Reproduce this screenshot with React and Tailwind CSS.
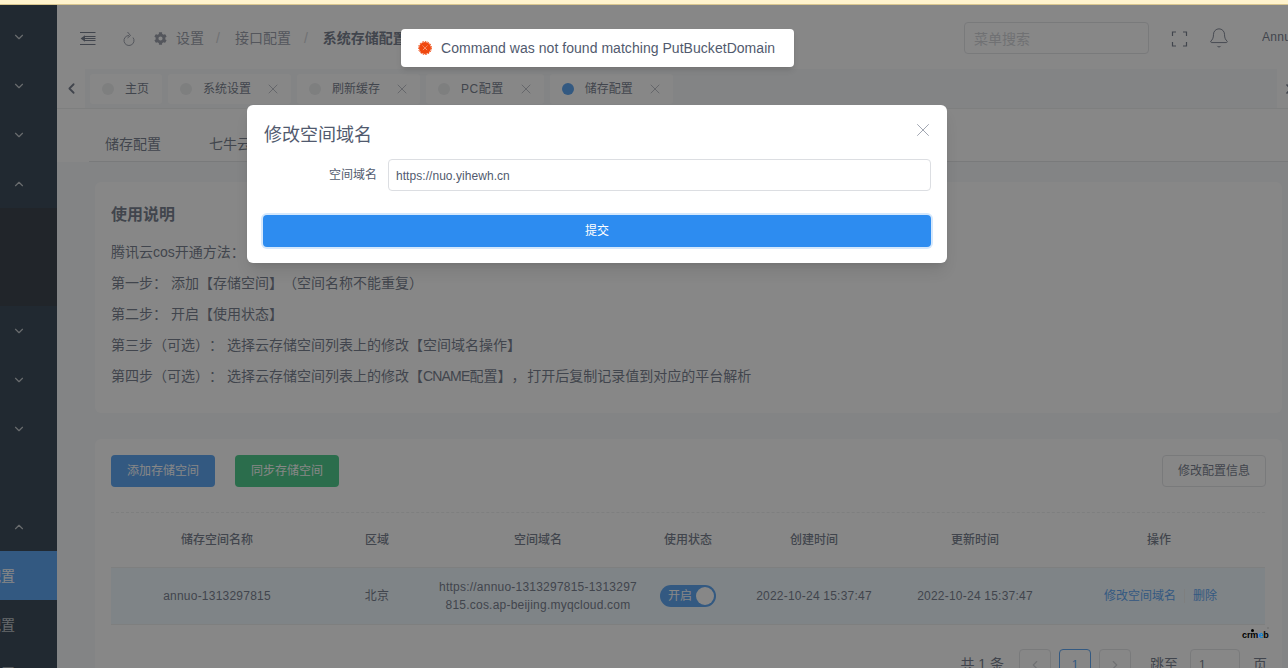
import React from "react";
import { ChevronDown, ChevronUp, ChevronLeft, ChevronRight, X, Bell } from "lucide-react";
import { FaCog } from "react-icons/fa";

const font = { fontFamily: '"Liberation Sans","Noto Sans CJK SC",sans-serif' };

function SideRow({ up, chev, text, active }) {
  return (
    <div className={`h-[49px] shrink-0 flex items-center ${active ? "bg-[#2d8cf0] text-white" : "text-white/70"}`}>
      {chev && (up ? <ChevronUp size={14} className="ml-[12px] text-white/70" /> : <ChevronDown size={14} className="ml-[12px] text-white/70" />)}
      {text && <span className="ml-[-13px] text-sm whitespace-nowrap">{text}</span>}
    </div>
  );
}

function Sidebar() {
  return (
    <aside className="w-[57px] shrink-0 bg-[#001529] pt-[7px] overflow-hidden flex flex-col">
      <SideRow chev />
      <SideRow chev />
      <SideRow chev />
      <SideRow chev up />
      <div className="h-[98px] shrink-0 bg-[#000c17]" />
      <SideRow chev />
      <SideRow chev />
      <SideRow chev />
      <SideRow />
      <SideRow chev up />
      <SideRow text="配置" active />
      <SideRow text="配置" />
      <SideRow text="配置" />
    </aside>
  );
}

function FoldIcon() {
  return (
    <svg width="16" height="13" viewBox="0 0 16 13" fill="none" stroke="currentColor" strokeWidth="1">
      <path d="M0 .5h15.500M0 12.500h15.500" />
      <path d="M5 4.500h10.500M5 6.500h10.500M5 8.500h10.500" />
      <path d="M5 3.200v6.600L.6 6.500z" fill="currentColor" stroke="none" />
    </svg>
  );
}

function RefreshIcon() {
  return (
    <svg width="12" height="15" viewBox="0 0 12 15" fill="none" stroke="currentColor" strokeWidth="1">
      <path d="M6 4.500A5 5 0 1 0 10 6.500" />
      <path d="M4.500 1L7.500 4.500L4.500 7" />
    </svg>
  );
}

function FullIcon() {
  return (
    <svg width="17" height="16" viewBox="0 0 17 16" fill="none" stroke="currentColor" strokeWidth="1.200">
      <path d="M5 1H1.500v4M12 1h3.500v4M5 15H1.500v-4M12 15h3.500v-4" />
    </svg>
  );
}

function Header() {
  return (
    <header className="h-[64px] shrink-0 bg-white flex items-center text-[#515a6e]">
      <div className="ml-[23px] mt-[3px] text-[#515a6e]"><FoldIcon /></div>
      <div className="ml-[27px] mt-[2px] text-[#808695]"><RefreshIcon /></div>
      <FaCog size={13} className="ml-[19px] mt-[3px] text-[#808695]" />
      <div className="ml-[9px] flex items-center text-sm mt-[1px]">
        <span className="text-[#808695]">设置</span>
        <span className="ml-[12px] mr-[15px] text-[#c5c8ce]">/</span>
        <span className="text-[#808695]">接口配置</span>
        <span className="ml-[13px] mr-[15px] text-[#c5c8ce]">/</span>
        <span className="font-bold text-[#515a6e] whitespace-nowrap">系统存储配置</span>
      </div>
      <div className="flex-1" />
      <div className="w-[185px] h-[32px] rounded border border-[#dcdee2] flex items-center pl-[9px] pt-[1px] mt-[2px] text-sm text-[#c5c8ce]">菜单搜索</div>
      <div className="ml-[22px] mt-[3px]"><FullIcon /></div>
      <Bell size={22} strokeWidth={1} className="ml-[20px] mt-[1px]" />
      <div className="ml-[32px] w-[26px] overflow-hidden text-xs whitespace-nowrap tracking-[0.3px]">Annuo</div>
    </header>
  );
}

function Tab({ text, close, active, wide }) {
  return (
    <div className={`h-[30px] bg-white rounded-[3px] flex items-center pl-[12px] mr-[6px] shrink-0 ${close ? "pr-[10px]" : "pr-[13px]"}`}>
      <span className={`w-[12px] h-[12px] rounded-full mr-[11px] ${active ? "bg-[#2d8cf0]" : "bg-[#e8eaec]"}`} />
      <span className={`text-xs whitespace-nowrap text-[#515a6e] ${wide ? "tracking-[0.5px]" : ""}`}>{text}</span>
      {close && <X size={16} strokeWidth={1} className="ml-[14px] text-[#808695]" />}
    </div>
  );
}

function TabBar() {
  return (
    <div className="h-[40px] shrink-0 bg-[#f5f7f9] border-b border-[#e8eaec] flex items-center">
      <div className="w-[28px] h-full bg-white flex items-center justify-center text-[#515a6e]"><ChevronLeft size={17} strokeWidth={2.500} /></div>
      <div className="ml-[5px] flex items-center flex-1 overflow-hidden">
        <Tab text="主页" />
        <Tab text="系统设置" close />
        <Tab text="刷新缓存" close />
        <Tab text="PC配置" close wide />
        <Tab text="储存配置" close active />
      </div>
      <div className="w-[11px] h-full bg-white overflow-hidden flex items-center">
        <ChevronRight size={16} strokeWidth={2.500} className="ml-[4px] shrink-0 text-[#515a6e]" />
      </div>
    </div>
  );
}

function SubTabs() {
  const items = ["储存配置", "七牛云储存", "阿里云储存", "腾讯云储存", "京东云储存", "华为云储存"];
  return (
    <div className="h-[53px] shrink-0 bg-white pl-[32px]">
      <div className="h-full border-b border-[#dcdee2] flex items-center pt-[17px] text-sm text-[#515a6e]">
        {items.map((t) => (
          <span key={t} className="ml-[16px] mr-[32px] whitespace-nowrap">{t}</span>
        ))}
      </div>
    </div>
  );
}

function Guide() {
  const rows = [
    "腾讯云cos开通方法：",
    "第一步： 添加【存储空间】（空间名称不能重复）",
    "第二步： 开启【使用状态】",
    "第三步（可选）： 选择云存储空间列表上的修改【空间域名操作】",
    <>第四步（可选）： 选择云存储空间列表上的修改【<span className="tracking-[-0.8px]">CNAME</span>配置】<span className="tracking-[-2px]">，</span> 打开后复制记录值到对应的平台解析</>,
  ];
  return (
    <section className="shrink-0 bg-white rounded-md ml-[38px] mt-[20px] w-[1187px] h-[231px] px-4 pt-[22px] text-[#515a6e] [text-spacing-trim:space-all]">
      <h2 className="h-[22px] leading-[22px] text-base font-bold mb-[11px]">使用说明</h2>
      {rows.map((r, i) => (
        <p key={i} className="h-[31px] leading-[31px] text-sm whitespace-nowrap">{r}</p>
      ))}
    </section>
  );
}

const cols = "grid grid-cols-[212px_108px_214px_86px_166px_156px_212px] items-center text-center text-xs text-[#515a6e]";

function StorageCard() {
  return (
    <section className="shrink-0 bg-white rounded-md ml-[38px] mt-[26px] w-[1187px] h-[260px] pl-4 pr-[17px] pt-4">
      <div className="flex items-start h-[32px]">
        <button className="w-[104px] h-[32px] rounded bg-[#2d8cf0] text-white text-xs">添加存储空间</button>
        <button className="ml-[20px] w-[104px] h-[32px] rounded bg-[#19be6b] text-white text-xs">同步存储空间</button>
        <div className="flex-1" />
        <button className="mr-[-1px] w-[104px] h-[32px] rounded border border-[#dcdee2] text-[#515a6e] text-xs">修改配置信息</button>
      </div>
      <div className="mt-[25px] border-t border-dashed border-[#e8eaec]" />
      <div className={`${cols} h-[54px] font-medium`}>
        <span>储存空间名称</span><span>区域</span><span>空间域名</span><span>使用状态</span><span>创建时间</span><span>更新时间</span><span>操作</span>
      </div>
      <div className={`${cols} h-[58px] bg-[#ebf7ff] border-y border-[#e8eaec] tracking-[0.22px]`}>
        <span>annuo-1313297815</span>
        <span>北京</span>
        <span className="leading-[18px] px-[6px] break-all">https://annuo-1313297815-1313297815.cos.ap-beijing.myqcloud.com</span>
        <span className="flex justify-center">
          <span className="w-[56px] h-[22px] rounded-full bg-[#2d8cf0] flex items-center pl-[8px] pr-[2px] justify-between text-white tracking-normal">
            开启
            <span className="w-[18px] h-[18px] rounded-full bg-white" />
          </span>
        </span>
        <span>2022-10-24 15:37:47</span>
        <span>2022-10-24 15:37:47</span>
        <span className="flex items-center justify-center pl-[3px] text-[#2d8cf0] tracking-normal">
          修改空间域名
          <span className="w-px h-[14px] bg-[#e8eaec] mx-2" />
          删除
        </span>
      </div>
      <div className="mt-[24px] mr-[-2px] flex items-start justify-end text-sm text-[#515a6e]">
        <span className="leading-[30px] mr-[15px] whitespace-nowrap">共 1 条</span>
        <span className="w-[32px] h-[32px] rounded border border-[#dcdee2] flex items-center justify-center text-[#c5c8ce]"><ChevronLeft size={14} /></span>
        <span className="ml-[8px] w-[32px] h-[32px] rounded border border-[#2d8cf0] flex items-center justify-center text-[#2d8cf0] text-xs">1</span>
        <span className="ml-[8px] w-[32px] h-[32px] rounded border border-[#dcdee2] flex items-center justify-center text-[#c5c8ce]"><ChevronRight size={14} /></span>
        <span className="ml-[19px] leading-[30px]">跳至</span>
        <span className="ml-[12px] w-[50px] h-[32px] rounded border border-[#dcdee2] text-xs leading-[30px] pl-[8px]">1</span>
        <span className="ml-[13px] leading-[30px]">页</span>
      </div>
    </section>
  );
}

function Modal() {
  return (
    <div className="absolute left-[247px] top-[105px] w-[700px] h-[158px] bg-white rounded-md shadow-lg z-20 text-[#515a6e]">
      <h3 className="absolute left-[17px] top-[18px] text-lg leading-[24px]">修改空间域名</h3>
      <X size={22} strokeWidth={0.800} className="absolute left-[665px] top-[14px] text-[#808695]" />
      <div className="flex items-center mt-[54px] mx-[16px]">
        <label className="w-[114px] text-right text-xs pr-0">空间域名</label>
        <div className="ml-[11px] flex-1 h-[32px] rounded border border-[#dcdee2] text-xs flex items-center pl-[7px] pt-[1px] tracking-[0.05px]">https://nuo.yihewh.cn</div>
      </div>
      <button className="block mt-[24px] mx-[16px] w-[668px] h-[32px] rounded bg-[#2d8cf0] ring-2 ring-[#d5e8fc] text-white text-xs">提交</button>
    </div>
  );
}

function Toast() {
  return (
    <div className="absolute left-[401px] top-[29px] w-[393px] h-[38px] bg-white rounded shadow-md z-30 flex items-center pl-[17px] text-[#515a6e]">
      <svg width="14" height="14" viewBox="0 0 14 14">
        <circle cx="7" cy="7" r="6" fill="#f0480f" />
        <circle cx="7" cy="7" r="6.500" fill="none" stroke="#f0480f" strokeWidth="1" strokeDasharray="1.500 1.200" />
        <path d="M4.700 4.700l4.600 4.600M9.300 4.700l-4.600 4.600" stroke="#ffd9cc" strokeWidth="0.800" strokeDasharray="1 0.600" />
      </svg>
      <span className="ml-[9px] text-sm tracking-[0.04px] whitespace-nowrap">Command was not found matching PutBucketDomain</span>
    </div>
  );
}

function Logo() {
  return (
    <div className="absolute left-[1242px] top-[629px] z-20 text-[9px] font-bold text-black leading-[13px] tracking-[-0.1px]">
      crm<span className="text-[#0a84e0]">e</span>b
      <span className="absolute left-[9px] top-[0px] w-[3px] h-[3px] rounded-full bg-black" />
      <span className="absolute left-[25px] top-[-2px] w-[2px] h-[2px] rounded-full bg-[#777]" />
    </div>
  );
}

export default function App() {
  return (
    <div className="relative w-full h-screen overflow-hidden bg-[#f5f7f9] flex flex-col" style={font}>
      <div className="h-[5px] shrink-0 bg-[#fff3cd] border-b border-[#d9c68f]" />
      <div className="flex flex-1 min-h-0">
        <Sidebar />
        <main className="flex-1 min-w-0 flex flex-col overflow-hidden">
          <Header />
          <TabBar />
          <SubTabs />
          <Guide />
          <StorageCard />
        </main>
      </div>
      <div className="absolute inset-x-0 top-[5px] bottom-0 bg-[rgba(55,55,55,0.6)] z-10" />
      <Logo />
      <Modal />
      <Toast />
    </div>
  );
}
